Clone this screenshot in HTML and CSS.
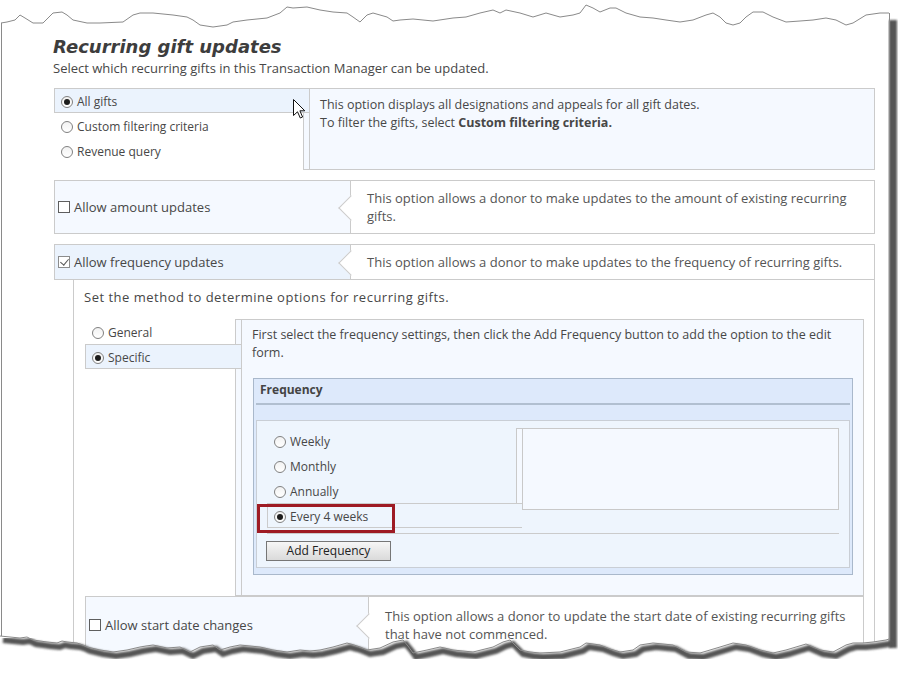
FILE: index.html
```html
<!DOCTYPE html>
<html lang="en">
<head>
    <meta charset="UTF-8">
    <title>Recurring gift updates</title>
    <link rel="stylesheet" href="styles.css">
</head>
<body>
    <div class="sheet">
        <h1 class="title">Recurring gift updates</h1>
        <p class="intro">Select which recurring gifts in this Transaction Manager can be updated.</p>

        <!-- which gifts -->
        <div class="choice scope">
            <ul class="choice-list">
                <li class="opt selected"><span class="radio on"></span>All gifts</li>
                <li class="opt"><span class="radio"></span>Custom filtering criteria</li>
                <li class="opt"><span class="radio"></span>Revenue query</li>
            </ul>
            <div class="choice-panel">
                <p>This option displays all designations and appeals for all gift dates.</p>
                <p>To filter the gifts, select <b>Custom filtering criteria.</b></p>
            </div>
        </div>

        <div class="setting">
            <div class="setting-label"><span class="check"></span>Allow amount updates</div>
            <div class="setting-help">This option allows a donor to make updates to the amount of existing recurring<br>gifts.</div>
        </div>

        <div class="setting on">
            <div class="setting-label"><span class="check on"></span>Allow frequency updates</div>
            <div class="setting-help">This option allows a donor to make updates to the frequency of recurring gifts.</div>
        </div>

        <div class="setting-body">
            <p class="method-intro">Set the method to determine options for recurring gifts.</p>

            <div class="choice method">
                <ul class="choice-list">
                    <li class="opt"><span class="radio"></span>General</li>
                    <li class="opt selected"><span class="radio on"></span>Specific</li>
                </ul>
                <div class="choice-panel">
                    <p class="help">First select the frequency settings, then click the Add Frequency button to add the option to the edit<br>form.</p>

                    <div class="freq">
                        <div class="freq-head">Frequency</div>
                        <div class="freq-inner">
                            <div class="freq-row">
                                <ul class="freq-list">
                                    <li class="opt"><span class="radio"></span>Weekly</li>
                                    <li class="opt"><span class="radio"></span>Monthly</li>
                                    <li class="opt"><span class="radio"></span>Annually</li>
                                    <li class="opt selected"><span class="radio on"></span>Every 4 weeks<span class="callout"></span></li>
                                </ul>
                                <div class="freq-box"></div>
                            </div>
                            <div class="freq-actions">
                                <button class="btn">Add Frequency</button>
                            </div>
                        </div>
                    </div>
                </div>
            </div>

            <div class="setting sub">
                <div class="setting-label"><span class="check"></span>Allow start date changes</div>
                <div class="setting-help">This option allows a donor to update the start date of existing recurring gifts<br>that have not commenced.</div>
            </div>
        </div>
    </div>

    <!-- mouse pointer -->
    <svg class="cursor" width="14" height="21" viewBox="0 0 14 21">
        <path d="M0.5 0.5 L0.5 16.5 L4.5 12.8 L7.3 19 L9.6 18 L6.9 11.8 L11.8 11.8 Z" fill="#fff" stroke="#111" stroke-width="1" stroke-linejoin="miter"/>
    </svg>

    <!-- torn paper edges -->
    <svg class="edges" width="906" height="682" viewBox="0 0 906 682">
        <defs>
            <filter id="soft" x="-10%" y="-10%" width="120%" height="120%">
                <feGaussianBlur stdDeviation="1.1"/>
            </filter>
        </defs>
        <path fill="#fff" d="M0,636 L10,637 L20,638 L27,637 L33,640 L40,641 L47,642 L57,643 L62,641 L67,642 L77,643 L83,645 L87,647 L100,650 L107,651 L113,652 L127,650 L140,647 L146,646 L153,645 L167,648 L180,647 L186,650 L190,652 L200,647 L213,645 L220,650 L230,647 L240,645 L250,646 L260,647 L273,650 L287,652 L300,650 L310,651 L320,650 L333,647 L347,643 L354,645 L360,647 L367,650 L380,648 L393,642 L403,640 L408,646 L413,653 L427,650 L440,647 L453,650 L463,651 L473,652 L493,647 L503,642 L510,640 L515,645 L520,650 L530,652 L540,653 L560,652 L580,647 L586,643 L600,645 L610,649 L620,652 L633,650 L640,645 L653,643 L663,644 L673,645 L686,652 L700,653 L710,650 L720,647 L733,643 L746,645 L760,650 L773,653 L786,650 L796,647 L806,644 L820,650 L833,652 L846,645 L853,643 L863,643 L873,642 L886,640 L889,639 L906,639 L906,682 L0,682 Z"/>
        <rect x="889" y="20" width="8" height="628" fill="#575757" filter="url(#soft)"/>
        <path fill="none" stroke="#555" stroke-width="6" filter="url(#soft)" transform="translate(3,4)" d="M0,636 L10,637 L20,638 L27,637 L33,640 L40,641 L47,642 L57,643 L62,641 L67,642 L77,643 L83,645 L87,647 L100,650 L107,651 L113,652 L127,650 L140,647 L146,646 L153,645 L167,648 L180,647 L186,650 L190,652 L200,647 L213,645 L220,650 L230,647 L240,645 L250,646 L260,647 L273,650 L287,652 L300,650 L310,651 L320,650 L333,647 L347,643 L354,645 L360,647 L367,650 L380,648 L393,642 L403,640 L408,646 L413,653 L427,650 L440,647 L453,650 L463,651 L473,652 L493,647 L503,642 L510,640 L515,645 L520,650 L530,652 L540,653 L560,652 L580,647 L586,643 L600,645 L610,649 L620,652 L633,650 L640,645 L653,643 L663,644 L673,645 L686,652 L700,653 L710,650 L720,647 L733,643 L746,645 L760,650 L773,653 L786,650 L796,647 L806,644 L820,650 L833,652 L846,645 L853,643 L863,643 L873,642 L886,640 L889,639"/>
        <path fill="none" stroke="#8a8a8a" stroke-width="1" d="M0,636 L10,637 L20,638 L27,637 L33,640 L40,641 L47,642 L57,643 L62,641 L67,642 L77,643 L83,645 L87,647 L100,650 L107,651 L113,652 L127,650 L140,647 L146,646 L153,645 L167,648 L180,647 L186,650 L190,652 L200,647 L213,645 L220,650 L230,647 L240,645 L250,646 L260,647 L273,650 L287,652 L300,650 L310,651 L320,650 L333,647 L347,643 L354,645 L360,647 L367,650 L380,648 L393,642 L403,640 L408,646 L413,653 L427,650 L440,647 L453,650 L463,651 L473,652 L493,647 L503,642 L510,640 L515,645 L520,650 L530,652 L540,653 L560,652 L580,647 L586,643 L600,645 L610,649 L620,652 L633,650 L640,645 L653,643 L663,644 L673,645 L686,652 L700,653 L710,650 L720,647 L733,643 L746,645 L760,650 L773,653 L786,650 L796,647 L806,644 L820,650 L833,652 L846,645 L853,643 L863,643 L873,642 L886,640 L889,639"/>
        <path fill="none" stroke="#8a8a8a" stroke-width="1" d="M1.5,636 L1.5,23"/>
        <path fill="none" stroke="#8a8a8a" stroke-width="1" d="M889.5,13 L889.5,639"/>
        <path fill="none" stroke="#8a8a8a" stroke-width="1" d="M1,23 L7,22 L15,20 L20,15 L25,18 L33,23 L43,23 L53,13 L62,12 L67,15 L73,20 L87,23 L100,23 L123,22 L133,15 L140,13 L153,13 L173,15 L187,17 L193,20 L200,25 L213,27 L227,25 L233,22 L247,20 L267,18 L280,13 L287,7 L293,8 L307,7 L320,10 L333,12 L347,13 L353,17 L360,22 L367,15 L373,13 L387,17 L393,21 L400,20 L413,19 L433,21 L453,18 L466,17 L480,13 L493,10 L500,13 L506,10 L520,13 L533,17 L546,13 L560,17 L573,15 L580,13 L586,5 L593,8 L600,12 L610,8 L616,8 L626,13 L640,17 L653,18 L666,20 L680,22 L693,20 L706,15 L713,13 L720,17 L726,23 L733,25 L740,23 L746,17 L753,12 L763,12 L773,17 L786,22 L800,21 L813,20 L826,18 L836,20 L846,25 L853,23 L866,15 L880,13 L889,13"/>
    </svg>
</body>
</html>
```

FILE: styles.css
```css
:root {
    --line: #cbcbcb;
    --pale: #f5f9ff;
    --tab: #ebf3fd;
    --text: #474747;
}

* {
    margin: 0;
    padding: 0;
    box-sizing: border-box;
}

body {
    font-family: 'Open Sans', 'Segoe UI', sans-serif;
    font-size: 12px;
    line-height: 18px;
    color: var(--text);
    background-color: #ffffff;
    position: relative;
    width: 906px;
    height: 682px;
    overflow: hidden;
}

.sheet {
    width: 875px;
    padding: 36px 0 0 53px;
}

.title {
    font-family: 'DejaVu Sans', Verdana, sans-serif;
    font-size: 18px;
    line-height: 22px;
    font-weight: 700;
    font-style: italic;
    color: #3d3d3d;
}

.intro {
    margin-top: 1px;
    font-size: 13px;
}

/* option list with a panel beside it */
.choice {
    display: flex;
    margin-left: 1px;
}

.scope {
    margin-top: 11px;
}

.choice-list,
.freq-list {
    list-style: none;
    flex: none;
}

.scope .choice-list {
    width: 249px;
}

.method .choice-list {
    width: 150px;
}

.freq-list {
    width: 249px;
}

.opt {
    display: flex;
    align-items: center;
    height: 25px;
    padding: 4px 0 1px 6px;
    border: 1px solid transparent;
    border-right: 0;
    white-space: nowrap;
}

.opt.selected {
    position: relative;
    z-index: 1;
    margin-right: -6px;
    background-color: var(--tab);
    border-color: var(--line);
}

.choice-panel {
    flex: 1;
    border: 1px solid var(--line);
    background-color: var(--pale);
    box-shadow: inset 5px 0 0 var(--pale), inset 6px 0 0 var(--line);
    font-size: 12.5px;
}

.scope .choice-panel {
    height: 82px;
    padding: 7px 16px;
}

.method .choice-panel {
    padding: 6px 10px 20px 16px;
}

.help {
    white-space: nowrap;
}

.radio {
    position: relative;
    flex: none;
    width: 12px;
    height: 12px;
    margin-right: 4px;
    border: 1px solid #808080;
    border-radius: 50%;
    background: linear-gradient(#f2f2f2, #ffffff);
}

.radio.on::after {
    content: "";
    position: absolute;
    left: 2px;
    top: 2px;
    width: 6px;
    height: 6px;
    border-radius: 50%;
    background-color: #1c1c1c;
}

.check {
    position: relative;
    flex: none;
    width: 12px;
    height: 12px;
    margin-right: 4px;
    border: 1px solid #5e5e5e;
    background-color: #ffffff;
}

.check.on {
    border-color: #8c8c8c;
}

.check.on::after {
    content: "";
    position: absolute;
    left: 3px;
    top: 0;
    width: 4px;
    height: 7px;
    border-right: 1px solid #555555;
    border-bottom: 1px solid #555555;
    transform: rotate(40deg);
}

/* checkbox settings with a description */
.setting {
    display: flex;
    margin: 10px 0 0 1px;
    border: 1px solid var(--line);
    font-size: 13px;
}

.setting-label {
    flex: none;
    width: 295px;
    display: flex;
    align-items: center;
    padding-left: 3px;
    background-color: var(--pale);
    white-space: nowrap;
}

.setting.on .setting-label {
    background-color: var(--tab);
}

.setting-help {
    flex: 1;
    position: relative;
    padding: 8px 16px;
    border-left: 1px solid var(--line);
    background-color: #ffffff;
    color: #555555;
    white-space: nowrap;
}

.setting-help::before {
    content: "";
    position: absolute;
    left: -9px;
    top: 50%;
    width: 17px;
    height: 17px;
    margin-top: -8.5px;
    background-color: #ffffff;
    border-left: 1px solid var(--line);
    border-bottom: 1px solid var(--line);
    transform: rotate(45deg);
}

.setting-body {
    margin-left: 20px;
    padding: 8px 10px 20px 10px;
    border-left: 1px solid var(--line);
    border-right: 1px solid var(--line);
}

.method-intro {
    font-size: 13px;
    letter-spacing: 0.5px;
}

.method {
    margin-top: 13px;
}

.setting.sub {
    margin-top: 0;
}

.sub .setting-label {
    width: 282px;
}

.sub .setting-help {
    padding: 10px 16px;
}

/* frequency editor */
.freq {
    margin: 16px 0 0 1px;
    width: 600px;
    padding: 0 2px 6px;
    border: 1px solid #a9b8cb;
    background-color: #dde9fb;
    font-size: 12px;
}

.freq-head {
    padding: 2px 4px 4px;
    font-weight: 700;
    color: #444444;
    border-bottom: 2px solid #b1bfd0;
}

.freq-inner {
    margin-top: 15px;
    padding: 7px 10px 6px;
    border: 1px solid #c9ced5;
    background-color: #eef5fd;
}

.freq-row {
    display: flex;
    align-items: flex-start;
}

.freq-list .opt.selected {
    background-color: #eef5fd;
}

.freq-box {
    flex: 1;
    height: 82px;
    border: 1px solid #c9c9c9;
    background-color: var(--pale);
    box-shadow: inset 5px 0 0 var(--pale), inset 6px 0 0 #c9c9c9;
}

.callout {
    position: absolute;
    left: -11px;
    top: 0;
    width: 138px;
    height: 29px;
    border: 3px solid #9e1b24;
}

.freq-actions {
    margin-top: 5px;
    padding-top: 7px;
    border-top: 1px solid var(--line);
}

.btn {
    display: block;
    width: 125px;
    height: 20px;
    margin-left: -1px;
    border: 1px solid #767676;
    background: linear-gradient(#f6f6f6, #dadada);
    font-family: 'Open Sans', 'Segoe UI', sans-serif;
    font-size: 12px;
    line-height: 16px;
    color: #222222;
}

.cursor {
    position: absolute;
    left: 293px;
    top: 99px;
    z-index: 5;
}

.edges {
    position: absolute;
    left: 0;
    top: 0;
    z-index: 10;
    pointer-events: none;
}
```
